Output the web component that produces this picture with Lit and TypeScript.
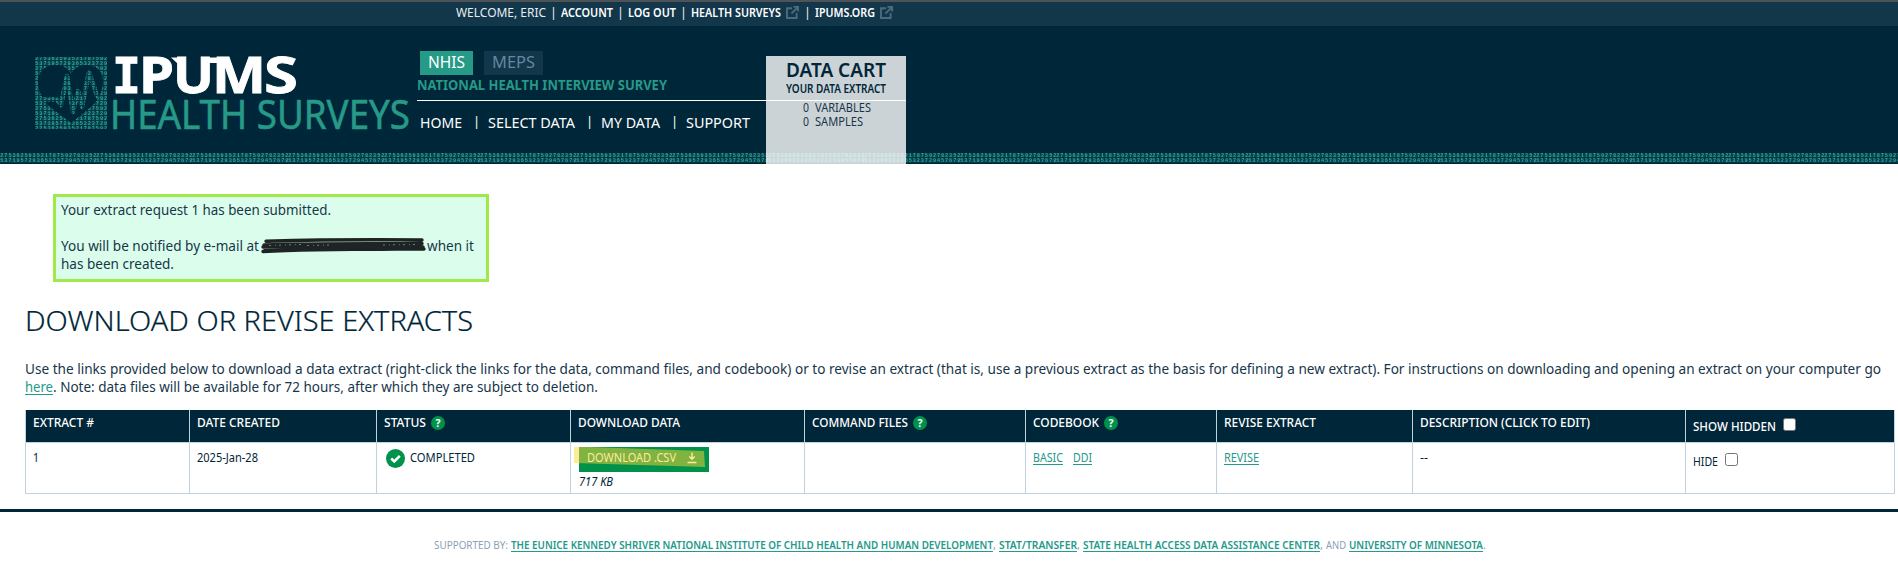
import { LitElement, html, svg, css } from "lit";
import { customElement, property } from "lit/decorators.js";

const ROW_A = "275362593521787592782352";
const ROW_B = "537195729365323729457678";

/* A run of text set to an exact measure by condensing or widening its glyphs. */
@customElement("fit-text")
class FitText extends LitElement {
  @property({ type: Number }) w = 0;
  static styles = css`
    :host { display: inline-block; white-space: nowrap; vertical-align: baseline; text-align: left; }
    .run { display: inline-block; transform-origin: 0 50%; text-decoration: var(--line, none); text-underline-offset: 2px; text-decoration-thickness: 1px; text-decoration-skip-ink: none; }
  `;
  render() {
    return html`<span class="run"><slot></slot></span>`;
  }
  updated() {
    const run = this.renderRoot.querySelector(".run") as HTMLElement;
    this.style.width = this.w + "px";
    run.style.transform = "none";
    const natural = run.getBoundingClientRect().width;
    if (natural) run.style.transform = `scaleX(${this.w / natural})`;
  }
}

const f = (text: string, w: number) => html`<fit-text .w=${w}>${text}</fit-text>`;
const link = (text: string, w: number) => html`<a class="link"><fit-text .w=${w}>${text}</fit-text></a>`;

const external = html`<svg class="ext" width="13" height="13" viewBox="0 0 13 13">
  <path d="M6 2.200H1V12H10.600V7" /><path d="M7.400 .9H12.100V5.600M12 1L5.400 7.600" />
</svg>`;

const help = html`<svg class="help" width="14" height="14" viewBox="0 0 14 14">
  <circle cx="7" cy="7" r="7" fill="#00914b" />
  <text x="7" y="10.700" text-anchor="middle" font-size="10.500" font-weight="700" fill="#fff">?</text>
</svg>`;

const digits = (id: string) => svg`<pattern id=${id} width="96" height="10" patternUnits="userSpaceOnUse">
  <rect width="96" height="4" y="0.5" fill="#0a454f"/><rect width="96" height="4" y="5.5" fill="#0a454f"/>
  <text class="digit" x="0.3" y="4.4" textLength="96">${ROW_A}</text>
  <text class="digit" x="0.3" y="9.4" textLength="96">${ROW_B}</text>
</pattern>`;

@customElement("app-root")
class AppRoot extends LitElement {
  static styles = css`
    :host { display: block; height: 568px; overflow: hidden; background: #fff; color: #17364a;
      font: 14px/18px "Noto Sans", "Open Sans", sans-serif; }
    * { box-sizing: border-box; }
    svg { display: block; flex: none; }
    .digit { font: 700 5.2px "Liberation Mono", monospace; fill: #2aa697; }
    .link { color: #249a8a; --line: underline; }

    .top { height: 26px; border-top: 2px solid #4f5356; background: #12364a; color: #e8eef1;
      display: flex; padding-left: 456px; font-size: 12.5px; line-height: 21px; }
    .top b { font-weight: 600; color: #fff; }
    .bar { width: 15px; text-align: center; }
    .ext { fill: none; stroke: #4b6b7d; stroke-width: 1.9; margin: 4px 0 0 5px; }
    .bar.late { width: 16px; padding-left: 1px; }

    .head { position: relative; display: flex; height: 138px; background: #002639; }
    .strip { position: absolute; left: 0; bottom: 1px; width: 100%; height: 10px; }
    .brand { width: 417px; padding: 10px 0 0 35px; }
    .ipums { font: 700 50px "Noto Sans", sans-serif; fill: #fff; stroke: #fff; stroke-width: .8; }
    .slab { font-family: "DejaVu Sans Mono", monospace; font-size: 49px; }
    .survey { font: 400 40.4px "Noto Sans", sans-serif; fill: #269987; stroke: #269987; stroke-width: .6; }

    .mid { width: 349px; padding-top: 25px; }
    .tabs { display: flex; gap: 11px; padding-left: 3px; font-size: 17px; line-height: 22px; }
    .tab { height: 24px; padding: 0 8px; background: #249a87; color: #fff; }
    .tab.off { background: #12364a; color: #6488a0; }
    .name { height: 25px; line-height: 19px; font-weight: 700; color: #269987; }
    .menu { display: flex; border-top: 1px solid #fff; padding-left: 3px; font-size: 15px; line-height: 42px; color: #fff; }
    .sep { width: 26px; padding-left: 11px; font-size: 13px; line-height: 41px; }

    .cart { position: relative; width: 140px; height: 108px; margin-top: 30px; background: rgba(255,255,255,.8); color: #002639; text-align: center; }
    .cart-t { font-size: 19px; font-weight: 600; line-height: 28px; height: 27px; }
    .cart-s { font-size: 12px; font-weight: 600; line-height: 12px; height: 17px; }
    .count { display: flex; font-size: 12.5px; line-height: 13px; padding-left: 37px; gap: 6px; color: #17364a; margin-bottom: 1px; }
    .rule { height: 1px; background: #fff; }

    .alert { width: 436px; height: 88px; margin: 30px 0 0 53px; border: 3px solid #9fe94b; background: #dbfeec; padding: 4px 0 0 5px; }
    .blank { height: 18px; }
    .mail { display: flex; }
    .scrawl { margin: -2px 0 -4px 2px; }
    h1 { margin: 20px 0 0 25px; font-size: 28px; line-height: 36px; font-weight: 300; color: #002639; -webkit-text-stroke: .2px #002639; }
    .intro { margin: 22px 0 0 25px; width: 1860px; white-space: nowrap; }

    .table { margin: 14px 0 0 25px; width: 1870px; font-size: 12.5px; }
    .row { display: grid; grid-template-columns: 164px 187px 194px 234px 221px 191px 196px 273px 210px; height: 51px;
      border-bottom: 1px solid #bfd2de; color: #002639; }
    .cell { display: flex; border-left: 1px solid #bfd2de; padding: 6px 0 0 7px; }
    .cell:last-child { border-right: 1px solid #bfd2de; padding-top: 10px; }
    .row.hd { height: 33px; font-weight: 500; color: #fff; background: #002639; }
    .hd .cell { padding-top: 4px; }
    .hd .cell:last-child { padding-top: 8px; }
    .help { margin: 2px 0 0 5px; }
    .help text { font-family: "Noto Sans", sans-serif; }
    .box { width: 13px; height: 13px; border: 1px solid #767676; border-radius: 2.5px; background: #fff; margin: 0 0 0 7px; }
    .ok { margin: 0 5px 0 2px; }
    .cell.dl { flex-direction: column; padding: 4px 0 0 8px; }
    .btn { position: relative; display: flex; width: 130px; height: 25px; background: #00914b; padding-left: 8px; line-height: 22px; color: #fff; }
    .save { margin: 5px 0 0 11px; }
    .mark { position: absolute; left: -5px; top: 0; }
    .size { font-style: italic; line-height: 20px; }
    .gap { width: 10px; }

    footer { margin-top: 15px; border-top: 3px solid #002639; padding: 24px 0 0 434px; display: flex; font-size: 11px; line-height: 18px; color: #8ba0b4; }
    footer .link { font-weight: 600; }
    .c { width: 6px; }
    .c.thin { width: 3px; }
  `;

  render() {
    return html`
      <div class="top">
        ${f("WELCOME, ERIC", 90)}<span class="bar">|</span><b>${f("ACCOUNT", 52)}</b><span class="bar">|</span>
        <b>${f("LOG OUT", 48)}</b><span class="bar">|</span><b>${f("HEALTH SURVEYS", 90)}</b>${external}
        <span class="bar late">|</span><b>${f("IPUMS.ORG", 60)}</b>${external}
      </div>
      <div class="head">
        <svg class="strip"><defs>${digits("band")}</defs><rect width="100%" height="10" fill="url(#band)" /></svg>
        <div class="brand">
          <svg width="380" height="112" viewBox="0 -20 380 112">
            <defs>${digits("grid")}</defs>
            <rect y="1" width="72" height="72" fill="url(#grid)" />
            <path fill="#002639" d="M36 67L15 51Q7 45 4 33C0 18 9 9 20 9C29 9 34 13 36 18C38 13 44 9 52 9C63 9 71 18 67 33Q64 44 56 51Z" />
            <path fill="none" stroke="url(#grid)" stroke-width="4.500" stroke-linejoin="round" d="M2 43.500H22L26 49L32 20L38 56L43 35L47 51L54 16L62 40L66 44H71" />
            <g class="ipums">
              <text class="slab" x="77" y="37.400" textLength="29" lengthAdjust="spacingAndGlyphs">I</text>
              <text x="104" y="37.400" textLength="35" lengthAdjust="spacingAndGlyphs">P</text>
              <text x="138" y="37.400" textLength="41" lengthAdjust="spacingAndGlyphs">U</text>
              <text x="177" y="37.400" textLength="54" lengthAdjust="spacingAndGlyphs">M</text>
              <text x="229" y="37.400" textLength="34" lengthAdjust="spacingAndGlyphs">S</text>
              <path d="M136 1.400H150V7H142ZM168 1.400H190V7H168Z" stroke="none" />
            </g>
            <text class="survey" x="75" y="72.600" textLength="300" lengthAdjust="spacingAndGlyphs">HEALTH SURVEYS</text>
          </svg>
        </div>
        <div class="mid">
          <div class="tabs"><span class="tab">${f("NHIS", 37)}</span><span class="tab off">${f("MEPS", 43)}</span></div>
          <div class="name">${f("NATIONAL HEALTH INTERVIEW SURVEY", 250)}</div>
          <div class="menu">${f("HOME", 42)}<span class="sep">|</span>${f("SELECT DATA", 87)}<span class="sep">|</span>${f("MY DATA", 59)}<span class="sep">|</span>${f("SUPPORT", 64)}</div>
        </div>
        <div class="cart">
          <div class="cart-t">${f("DATA CART", 100)}</div>
          <div class="cart-s">${f("YOUR DATA EXTRACT", 100)}</div>
          <div class="rule"></div>
          <div class="count">${f("0", 6)}${f("VARIABLES", 56)}</div>
          <div class="count">${f("0", 6)}${f("SAMPLES", 48)}</div>
        </div>
      </div>

      <div class="alert">
        <div>${f("Your extract request 1 has been submitted.", 270)}</div>
        <div class="blank"></div>
        <div class="mail">${f("You will be notified by e-mail at", 198)}
          <svg class="scrawl" width="166" height="24" viewBox="0 0 166 24">
            <path d="M2 14L40 12L158 9L160 13L120 16L4 16Z" fill="#222827" />
            <path d="M5 6.200C50 5 110 4.500 161 5M3 10C60 8 110 9 161 8.500M2 12C60 11 120 11 162 12M2 16.500C50 13.500 110 14 163 14" fill="none" stroke="#1e2423" stroke-width="3.400" stroke-linecap="round" />
            <path d="M8 10.500L40 9.500M46 10.500L70 10M122 10L156 9.500" fill="none" stroke="#6f7f79" stroke-width="1" stroke-dasharray="2 4 1 3" />
          </svg>${f("when it", 47)}</div>
        <div>${f("has been created.", 113)}</div>
      </div>
      <h1>${f("DOWNLOAD OR REVISE EXTRACTS", 448)}</h1>
      <div class="intro">
        <div>${f("Use the links provided below to download a data extract (right-click the links for the data, command files, and codebook) or to revise an extract (that is, use a previous extract as the basis for defining a new extract). For instructions on downloading and opening an extract on your computer go", 1856)}</div>
        <div>${link("here", 28)}${f(". Note: data files will be available for 72 hours, after which they are subject to deletion.", 545)}</div>
      </div>

      <div class="table">
        <div class="row hd">
          <div class="cell">${f("EXTRACT #", 61)}</div>
          <div class="cell">${f("DATE CREATED", 83)}</div>
          <div class="cell">${f("STATUS", 42)}${help}</div>
          <div class="cell">${f("DOWNLOAD DATA", 102)}</div>
          <div class="cell">${f("COMMAND FILES", 96)}${help}</div>
          <div class="cell">${f("CODEBOOK", 66)}${help}</div>
          <div class="cell">${f("REVISE EXTRACT", 92)}</div>
          <div class="cell">${f("DESCRIPTION (CLICK TO EDIT)", 170)}</div>
          <div class="cell">${f("SHOW HIDDEN", 83)}<span class="box"></span></div>
        </div>
        <div class="row">
          <div class="cell">${f("1", 6)}</div>
          <div class="cell">${f("2025-Jan-28", 61)}</div>
          <div class="cell">
            <svg class="ok" width="19" height="19" viewBox="0 0 19 19"><circle cx="9.500" cy="9.500" r="9.500" fill="#00914b" /><path d="M5.200 9.500L8.300 12.500L13.800 6.800" fill="none" stroke="#fff" stroke-width="2.600" /></svg>
            ${f("COMPLETED", 65)}
          </div>
          <div class="cell dl">
            <div class="btn">${f("DOWNLOAD .CSV", 89)}
              <svg class="save" width="10" height="12" viewBox="0 0 10 12"><path d="M5 0.500V7M2.300 4.500L5 7.200L7.700 4.500M.5 10.500H9.500" fill="none" stroke="#fff" stroke-width="1.400" /></svg>
              <svg class="mark" width="132" height="22" viewBox="0 0 132 22"><path d="M0 0H15L130 4L131 20L0 16Z" fill="#ffd633" fill-opacity=".5" /></svg>
            </div>
            <div class="size">${f("717 KB", 34)}</div>
          </div>
          <div class="cell"></div>
          <div class="cell">${link("BASIC", 30)}<span class="gap"></span>${link("DDI", 19)}</div>
          <div class="cell">${link("REVISE", 35)}</div>
          <div class="cell">${f("--", 8)}</div>
          <div class="cell">${f("HIDE", 25)}<span class="box"></span></div>
        </div>
      </div>

      <footer>
        ${f("SUPPORTED BY:", 74)}<span class="c thin"></span>
        ${link("THE EUNICE KENNEDY SHRIVER NATIONAL INSTITUTE OF CHILD HEALTH AND HUMAN DEVELOPMENT", 482)}<span class="c">,</span>
        ${link("STAT/TRANSFER", 78)}<span class="c">,</span>${link("STATE HEALTH ACCESS DATA ASSISTANCE CENTER", 237)}<span class="c">,</span>
        ${f("AND", 20)}<span class="c thin"></span>${link("UNIVERSITY OF MINNESOTA", 134)}<span>.</span>
      </footer>
    `;
  }
}
